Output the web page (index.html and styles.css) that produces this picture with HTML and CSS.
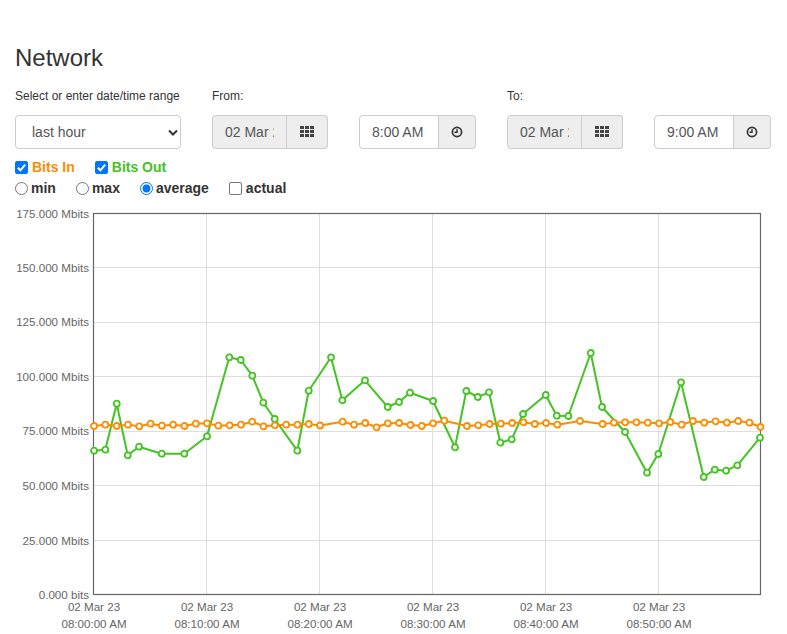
FILE: index.html
```html
<!DOCTYPE html>
<html>
<head>
<meta charset="utf-8">
<title>Network</title>
<link rel="stylesheet" href="styles.css">
</head>
<body>
<div class="page">
  <h1 class="title">Network</h1>
  <div class="controls">
    <div class="field field-range">
      <label class="field-label">Select or enter date/time range</label>
      <div class="select-wrap">
        <select class="select">
          <option>last hour</option>
        </select>
        <svg class="chev" width="10" height="7" viewBox="0 0 10 7"><path d="M1 1.5 L5 5.5 L9 1.5" fill="none" stroke="#333" stroke-width="2"/></svg>
      </div>
    </div>
    <div class="field">
      <label class="field-label">From:</label>
      <div class="pair">
        <div class="group group-date">
          <input class="input input-date" type="text" value="02 Mar 2023" readonly>
          <span class="addon addon-date">
            <svg width="14" height="11" viewBox="0 0 14 11" fill="#444"><rect x="0" y="0" width="4" height="3"/><rect x="5" y="0" width="4" height="3"/><rect x="10" y="0" width="4" height="3"/><rect x="0" y="4" width="4" height="3"/><rect x="5" y="4" width="4" height="3"/><rect x="10" y="4" width="4" height="3"/><rect x="0" y="8" width="4" height="3"/><rect x="5" y="8" width="4" height="3"/><rect x="10" y="8" width="4" height="3"/></svg>
          </span>
        </div>
        <div class="group group-time">
          <input class="input input-time" type="text" value="8:00 AM">
          <span class="addon addon-time">
            <svg width="12" height="12" viewBox="0 0 12 12"><circle cx="6" cy="6" r="4.6" fill="none" stroke="#333" stroke-width="1.7"/><path d="M6 3.2 V6.3 H3.5" fill="none" stroke="#333" stroke-width="1.5"/></svg>
          </span>
        </div>
      </div>
    </div>
    <div class="field">
      <label class="field-label">To:</label>
      <div class="pair">
        <div class="group group-date">
          <input class="input input-date" type="text" value="02 Mar 2023" readonly>
          <span class="addon addon-date">
            <svg width="14" height="11" viewBox="0 0 14 11" fill="#444"><rect x="0" y="0" width="4" height="3"/><rect x="5" y="0" width="4" height="3"/><rect x="10" y="0" width="4" height="3"/><rect x="0" y="4" width="4" height="3"/><rect x="5" y="4" width="4" height="3"/><rect x="10" y="4" width="4" height="3"/><rect x="0" y="8" width="4" height="3"/><rect x="5" y="8" width="4" height="3"/><rect x="10" y="8" width="4" height="3"/></svg>
          </span>
        </div>
        <div class="group group-time">
          <input class="input input-time" type="text" value="9:00 AM">
          <span class="addon addon-time">
            <svg width="12" height="12" viewBox="0 0 12 12"><circle cx="6" cy="6" r="4.6" fill="none" stroke="#333" stroke-width="1.7"/><path d="M6 3.2 V6.3 H3.5" fill="none" stroke="#333" stroke-width="1.5"/></svg>
          </span>
        </div>
      </div>
    </div>
  </div>

  <div class="options">
    <div class="opt-row">
      <label class="opt"><span class="box"><input class="check" type="checkbox" checked><svg class="tick" width="13" height="13" viewBox="0 0 13 13"><path d="M2.8 6.8 L5.4 9.3 L10.2 3.7" fill="none" stroke="#fff" stroke-width="2"/></svg></span><span class="bits-in">Bits In</span></label>
      <label class="opt"><span class="box"><input class="check" type="checkbox" checked><svg class="tick" width="13" height="13" viewBox="0 0 13 13"><path d="M2.8 6.8 L5.4 9.3 L10.2 3.7" fill="none" stroke="#fff" stroke-width="2"/></svg></span><span class="bits-out">Bits Out</span></label>
    </div>
    <div class="opt-row">
      <label class="opt"><input class="radio" type="radio" name="mode"><span>min</span></label>
      <label class="opt"><input class="radio" type="radio" name="mode"><span>max</span></label>
      <label class="opt"><input class="radio" type="radio" name="mode" checked><span>average</span></label>
      <label class="opt"><span class="box"><input class="check" type="checkbox"></span><span>actual</span></label>
    </div>
  </div>
</div>

<svg class="chart" width="787" height="435" viewBox="0 199 787 435">
  <defs>
    <marker id="mg" markerWidth="10" markerHeight="10" refX="5" refY="5" markerUnits="userSpaceOnUse">
      <circle cx="5" cy="5" r="3" fill="#fff" stroke="#44c422" stroke-width="1.8"/>
    </marker>
    <marker id="mo" markerWidth="10" markerHeight="10" refX="5" refY="5" markerUnits="userSpaceOnUse">
      <circle cx="5" cy="5" r="3" fill="#fff" stroke="#ff8c00" stroke-width="1.8"/>
    </marker>
  </defs>
  <g class="grid">
    <line x1="93.5" y1="267.5" x2="760.5" y2="267.5"/>
    <line x1="93.5" y1="322.5" x2="760.5" y2="322.5"/>
    <line x1="93.5" y1="376.5" x2="760.5" y2="376.5"/>
    <line x1="93.5" y1="431.5" x2="760.5" y2="431.5"/>
    <line x1="93.5" y1="485.5" x2="760.5" y2="485.5"/>
    <line x1="93.5" y1="540.5" x2="760.5" y2="540.5"/>
    <line x1="206.5" y1="213.5" x2="206.5" y2="594.5"/>
    <line x1="319.5" y1="213.5" x2="319.5" y2="594.5"/>
    <line x1="432.5" y1="213.5" x2="432.5" y2="594.5"/>
    <line x1="545.5" y1="213.5" x2="545.5" y2="594.5"/>
    <line x1="658.5" y1="213.5" x2="658.5" y2="594.5"/>
  </g>
  <rect class="frame" x="93.5" y="213.5" width="667" height="381"/>
  <g class="ylab">
    <text x="89" y="217.5">175.000 Mbits</text>
    <text x="89" y="271.8">150.000 Mbits</text>
    <text x="89" y="326.4">125.000 Mbits</text>
    <text x="89" y="380.9">100.000 Mbits</text>
    <text x="89" y="435.4">75.000 Mbits</text>
    <text x="89" y="489.9">50.000 Mbits</text>
    <text x="89" y="544.5">25.000 Mbits</text>
    <text x="89" y="599">0.000 bits</text>
  </g>
  <g class="xlab">
    <text x="94" y="611">02 Mar 23</text><text x="94" y="628">08:00:00 AM</text>
    <text x="207" y="611">02 Mar 23</text><text x="207" y="628">08:10:00 AM</text>
    <text x="320" y="611">02 Mar 23</text><text x="320" y="628">08:20:00 AM</text>
    <text x="433" y="611">02 Mar 23</text><text x="433" y="628">08:30:00 AM</text>
    <text x="546" y="611">02 Mar 23</text><text x="546" y="628">08:40:00 AM</text>
    <text x="659" y="611">02 Mar 23</text><text x="659" y="628">08:50:00 AM</text>
  </g>
  <polyline class="series-out" marker-start="url(#mg)" marker-mid="url(#mg)" marker-end="url(#mg)"
    points="94,450.7 105.3,449.7 116.7,403.7 127.7,455.3 139,446.7 161.7,453.7 184.3,453.7 207,436.3 229.3,357.3 240.7,360 252.3,375.7 263.3,402.7 274.7,419 297.3,450.7 308.7,390.7 331,357.3 342.3,400.3 365,380.3 387.7,407 399,402 410,392.7 433,401 455,447.3 466.3,391 477.7,397 489,392.3 500.3,442.7 511.7,439.3 523,414 545.7,395 556.7,415.7 568.3,416 590.7,353 602,407 625,432 647,472.7 658.3,454 681,382.3 703.7,477 714.7,469.7 726,470.7 737.3,465.3 760,437.7"/>
  <polyline class="series-in" marker-start="url(#mo)" marker-mid="url(#mo)" marker-end="url(#mo)"
    points="94,426 105.3,424.7 116.6,426 127.9,424.7 139.2,426.3 150.5,423.7 161.8,425.7 173.1,424.7 184.4,426 195.7,423.7 207,423.3 218.3,425.7 229.6,425.3 240.9,424.7 252.2,421.7 263.5,426.3 274.8,425.3 286.1,424.7 297.4,424.7 308.7,424 320,425.5 342.6,421.7 353.9,424.7 365.2,423 376.5,427.3 387.8,423.3 399.1,423 410.4,425 421.7,426 433,423.3 444.3,420.7 466.9,426 478.2,425.3 489.5,424 500.8,423.7 512.1,423 523.4,422.3 534.7,424 546,423 557.3,424.7 579.9,421 602.5,424 613.8,422.7 625.1,422.3 636.4,422.3 647.7,422.7 659,423.3 670.3,422 681.6,424.7 692.9,421 704.2,422.7 715.5,421.3 726.8,422.7 738.1,421 749.4,422.7 760.5,427"/>
</svg>
</body>
</html>
```

FILE: styles.css
```css
html, body {
  margin: 0;
  padding: 0;
  background: #fff;
}
body {
  font-family: "Liberation Sans", Arial, Helvetica, sans-serif;
  color: #333;
}
.page {
  padding: 0 15px;
}
.title {
  margin: 45px 0 0;
  font-size: 24px;
  font-weight: normal;
  line-height: 26px;
  color: #333;
}
.controls {
  display: flex;
  gap: 31px;
  margin-top: 18px;
}
.field-label {
  display: block;
  font-size: 12px;
  line-height: 15px;
  margin-bottom: 11px;
  color: #333;
}
.field-range {
  width: 166px;
}
.select-wrap {
  position: relative;
  width: 166px;
  height: 34px;
}
.select {
  appearance: none;
  -webkit-appearance: none;
  box-sizing: border-box;
  width: 166px;
  height: 34px;
  margin: 0;
  padding: 0 16px;
  border: 1px solid #ccc;
  border-radius: 4px;
  background: #fff;
  font-family: "Liberation Sans", Arial, sans-serif;
  font-size: 14px;
  color: #555;
}
.chev {
  position: absolute;
  left: 153px;
  top: 14px;
}
.pair {
  display: flex;
  gap: 31px;
}
.group {
  display: flex;
  height: 34px;
}
.input {
  box-sizing: border-box;
  height: 34px;
  margin: 0;
  padding: 0 12px;
  border: 1px solid #ccc;
  border-radius: 4px 0 0 4px;
  font-family: "Liberation Sans", Arial, sans-serif;
  font-size: 14px;
  color: #555;
  background: #fff;
  outline: none;
}
.input-date {
  width: 75px;
  background: #eee;
}
.input-time {
  width: 80px;
}
.addon {
  box-sizing: border-box;
  height: 34px;
  display: flex;
  align-items: center;
  justify-content: center;
  background: #eee;
  border: 1px solid #ccc;
  border-left: 0;
  border-radius: 0 4px 4px 0;
}
.addon-date {
  width: 41px;
}
.addon-date svg {
  margin-top: -2px;
}
.addon-time {
  width: 37px;
}
.options {
  margin-top: 8px;
}
.opt-row {
  display: flex;
  align-items: center;
  gap: 20px;
  height: 21px;
}
.opt {
  display: flex;
  align-items: center;
  font-size: 14px;
  font-weight: bold;
  line-height: 21px;
  color: #333;
}
.box {
  position: relative;
  width: 13px;
  height: 13px;
  margin-right: 4px;
  flex: none;
}
.check {
  appearance: none;
  -webkit-appearance: none;
  box-sizing: border-box;
  display: block;
  width: 13px;
  height: 13px;
  margin: 0;
  border: 1px solid #767676;
  border-radius: 2px;
  background: #fff;
}
.check:checked {
  background: #0075ff;
  border-color: #0075ff;
}
.tick {
  position: absolute;
  left: 0;
  top: 0;
  pointer-events: none;
}
.radio {
  accent-color: #0075ff;
  width: 13px;
  height: 13px;
  margin: 0 3px 0 0;
}
.bits-in {
  color: #ff8c00;
}
.bits-out {
  color: #44c422;
}
.chart {
  display: block;
}
.grid line {
  stroke: #dedede;
  stroke-width: 1;
}
.frame {
  fill: none;
  stroke: #666;
  stroke-width: 1.2;
}
.ylab text {
  font-family: "Liberation Sans", Arial, sans-serif;
  font-size: 11.6px;
  fill: #666;
  text-anchor: end;
}
.xlab text {
  font-family: "Liberation Sans", Arial, sans-serif;
  font-size: 11.6px;
  fill: #666;
  text-anchor: middle;
}
.series-out {
  fill: none;
  stroke: #44c422;
  stroke-width: 2;
  stroke-linejoin: round;
}
.series-in {
  fill: none;
  stroke: #ff8c00;
  stroke-width: 2;
  stroke-linejoin: round;
}
```
